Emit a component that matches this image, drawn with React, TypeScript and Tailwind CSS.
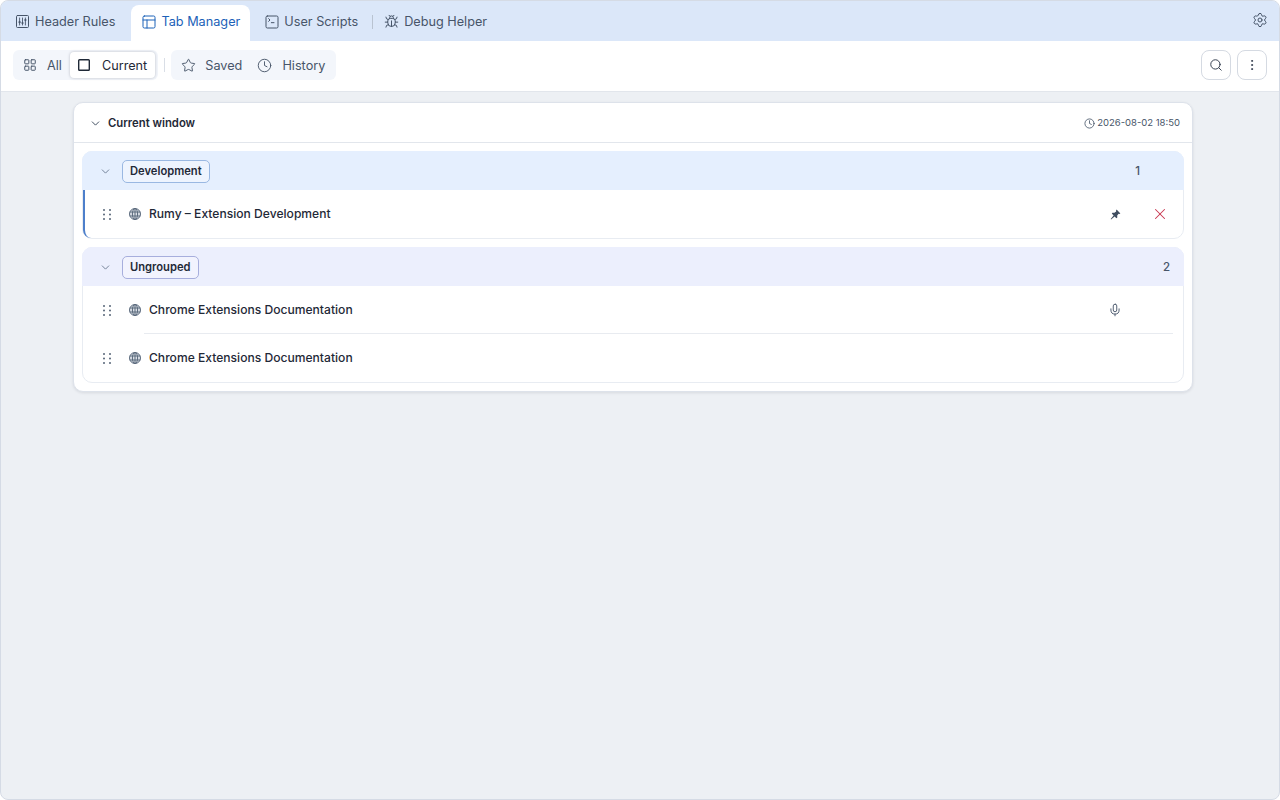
import React from "react";
import { PanelsTopLeft, SquareTerminal, Bug, Settings, LayoutGrid, Star, Clock, Search, EllipsisVertical, ChevronDown, Mic, X } from "lucide-react";

function HeaderRulesIcon() {
  return (
    <svg width="13" height="13" viewBox="0 0 13 13" fill="none" stroke="currentColor" strokeWidth="1" strokeLinecap="round">
      <rect x="0.5" y="0.5" width="12" height="12" rx="1" />
      <path d="M3.6 3v7M6.5 3v7M9.4 3v7" strokeWidth="0.9" />
      <circle cx="3.6" cy="7.2" r="1.1" fill="currentColor" stroke="none" />
      <circle cx="6.5" cy="8" r="1.1" fill="currentColor" stroke="none" />
      <circle cx="9.4" cy="5" r="1.1" fill="currentColor" stroke="none" />
    </svg>
  );
}

function SquareIcon() {
  return (
    <svg width="14" height="14" viewBox="0 0 14 14" fill="none" stroke="currentColor" strokeWidth="1.4">
      <rect x="1.7" y="1.7" width="10.6" height="10.6" rx="0.8" />
    </svg>
  );
}

function GripIcon() {
  return (
    <svg width="8" height="11" viewBox="0 0 8 11" fill="#566577" className="mr-[18px] shrink-0">
      <circle cx="1" cy="1" r="1" />
      <circle cx="7" cy="1" r="1" />
      <circle cx="1" cy="5.5" r="1" />
      <circle cx="7" cy="5.5" r="1" />
      <circle cx="1" cy="10" r="1" />
      <circle cx="7" cy="10" r="1" />
    </svg>
  );
}

function GlobeIcon() {
  return (
    <svg width="12" height="12" viewBox="0 0 12 12" fill="#94a3b8" fillOpacity="0.35" stroke="#5b6a7d" strokeWidth="1" className="mr-[8px] shrink-0">
      <circle cx="6" cy="6" r="5.5" />
      <ellipse cx="6" cy="6" rx="2.6" ry="5.5" fill="none" />
      <path d="M6 .5v11M.8 4h10.4M.8 8h10.4" fill="none" />
    </svg>
  );
}

function PinIcon() {
  return (
    <svg width="11" height="11" viewBox="0 0 11 11" className="shrink-0 text-[#3f4d60]" fill="currentColor">
      <path d="M6.6.6 10.4 4.4 9.3 5 8.6 4.8 7.2 6.6 7.3 8.6 6.4 9.2 4.6 7.4 1.1 10.4 .7 10 3.6 6.4 1.8 4.6 2.4 3.7 4.4 3.8 6.2 2.4 6 1.7Z" />
    </svg>
  );
}

function TopTab({ icon, label, gap }: { icon: React.ReactNode; label: string; gap: string }) {
  return (
    <div className={`${gap} flex items-center text-[#475569]`}>
      {icon}
      <span>{label}</span>
    </div>
  );
}

function Seg({ icon, label, active, labelClass }: { icon: React.ReactNode; label: string; active?: boolean; labelClass?: string }) {
  return (
    <div className={active ? "flex h-[26px] items-center gap-[10px] rounded-[4px] bg-white pl-[7px] pr-[8px] text-[#1f2937] shadow-[0_0_3px_rgba(15,23,42,0.25)]" : "flex h-[26px] items-center gap-[10px] pl-[7px] pr-[8px] text-[#475569]"}>
      {icon}
      <span className={`${labelClass ?? ""} pt-[2px]`}>{label}</span>
    </div>
  );
}

function TabRow({ title, accent, trailing, divider }: { title: string; accent?: boolean; trailing?: React.ReactNode; divider?: boolean }) {
  return (
    <div className={accent ? "relative flex h-[48px] items-center rounded-bl-[8px] border-l-2 border-[#4d7fcb] pl-[18px]" : "relative flex h-[48px] items-center pl-[20px]"}>
      <GripIcon />
      <GlobeIcon />
      <span className="flex-1 text-[12.1px] font-medium text-[#1f2937]">{title}</span>
      {trailing}
      {divider && <div className="absolute bottom-0 left-[61px] right-[10px] h-px bg-[#e8ebf0]" />}
    </div>
  );
}

function Group({ name, count, tone, border, countClass, children }: { name: string; count: number; tone: string; border: string; countClass: string; children: React.ReactNode }) {
  return (
    <div className="rounded-[10px] border border-[#e8ecf2] bg-white">
      <div className={`${tone} -m-px flex h-[39px] items-center rounded-t-[10px] pl-[17px] pt-[1px]`}>
        <ChevronDown size={13} strokeWidth={1.6} className="mr-[10px] text-[#64748b]" />
        <span className={`${border} rounded-[5px] border px-[7px] py-[3px] text-[11.2px] leading-[15px] font-semibold text-[#1f2937]`}>{name}</span>
        <div className="flex-1" />
        <span className={`${countClass} pt-[2px] text-[11.5px] font-medium text-[#475569]`}>{count}</span>
      </div>
      <div className="mt-px">{children}</div>
    </div>
  );
}

export default function App() {
  return (
    <div className="flex h-[800px] flex-col overflow-hidden rounded-[8px] border border-[#d5dbe5] bg-[#edf0f4] font-['Inter',sans-serif] text-[12.7px]">
      <div className="flex h-[40px] shrink-0 items-end bg-[#dbe7f9] pl-[15px] pr-[11px]">
        <div className="flex h-[40px] flex-1 items-center pt-[2px]">
          <TopTab icon={<HeaderRulesIcon />} label="Header Rules" gap="gap-[6px]" />
          <div className="ml-[16px] mr-[14px] flex h-[36px] items-center gap-[4px] self-end rounded-t-[8px] bg-white pb-[2px] pl-[10px] pr-[10px] text-[#1d62b8]">
            <PanelsTopLeft size={16} strokeWidth={1.5} />
            <span>Tab Manager</span>
          </div>
          <TopTab icon={<SquareTerminal size={16} strokeWidth={1.5} />} label="User Scripts" gap="gap-[4px]" />
          <div className="ml-[14px] mr-[11px] h-[14px] w-px bg-[#b9c3d1]" />
          <TopTab icon={<Bug size={15} strokeWidth={1.6} />} label="Debug Helper" gap="gap-[5px]" />
        </div>
        <Settings size={16} strokeWidth={1.5} className="mb-[13px] text-[#475569]" />
      </div>

      <div className="flex h-[51px] shrink-0 items-center border-b border-[#e2e6ec] bg-white px-[12px] pb-[2px]">
        <div className="flex h-[30px] items-center rounded-[6px] bg-[#f3f6fb] px-[3px]">
          <Seg icon={<LayoutGrid size={14} strokeWidth={1.7} />} label="All" />
          <Seg icon={<SquareIcon />} label="Current" labelClass="ml-[1px]" active />
        </div>
        <div className="ml-[6px] mr-[6px] h-[14px] w-px bg-[#d9dee6]" />
        <div className="flex h-[30px] items-center rounded-[6px] bg-[#f3f6fb] px-[3px]">
          <Seg icon={<Star size={15} strokeWidth={1.5} />} label="Saved" labelClass="-ml-[1px]" />
          <Seg icon={<Clock size={15} strokeWidth={1.5} />} label="History" />
        </div>
        <div className="flex-1" />
        <div className="flex gap-[6px]">
          <div className="flex h-[30px] w-[30px] items-center justify-center rounded-[8px] border border-[#d5dae2] text-[#374151]">
            <Search size={14} strokeWidth={1.7} />
          </div>
          <div className="flex h-[30px] w-[30px] items-center justify-center rounded-[8px] border border-[#d5dae2] text-[#374151]">
            <EllipsisVertical size={14} strokeWidth={1.7} />
          </div>
        </div>
      </div>

      <div className="ml-[72px] mt-[10px] w-[1120px] rounded-[10px] border border-[#dde2ea] bg-white shadow-[0_1px_3px_rgba(15,23,42,0.1)]">
        <div className="flex h-[40px] items-center border-b border-[#e2e6ec] pl-[15px] pr-[12px] pt-[2px]">
          <ChevronDown size={13} strokeWidth={1.7} className="mr-[6px] text-[#334155]" />
          <span className="flex-1 text-[11.3px] font-semibold text-[#1f2937]">Current window</span>
          <Clock size={11} strokeWidth={1.8} className="mr-[2px] text-[#475569]" />
          <span className="text-[9.5px] text-[#475569]">2026-08-02 18:50</span>
        </div>
        <div className="flex flex-col gap-[8px] p-[8px]">
          <Group name="Development" count={1} countClass="mr-[44px]" tone="bg-[#e5effe]" border="border-[#9ab8e2] bg-[#eef4fe]">
            <TabRow
              title="Rumy – Extension Development"
              accent
              trailing={
                <div className="mr-[14px] flex items-center gap-[30px]">
                  <PinIcon />
                  <X size={18} strokeWidth={1.4} className="text-[#c8364f]" />
                </div>
              }
            />
          </Group>
          <Group name="Ungrouped" count={2} countClass="mr-[14px]" tone="bg-[#ecEFfd]" border="border-[#a7aedd] bg-[#f2f3fe]">
            <TabRow
              title="Chrome Extensions Documentation"
              divider
              trailing={<Mic size={14} strokeWidth={1.6} className="mr-[61px] text-[#475569]" />}
            />
            <TabRow title="Chrome Extensions Documentation" />
          </Group>
        </div>
      </div>
    </div>
  );
}
